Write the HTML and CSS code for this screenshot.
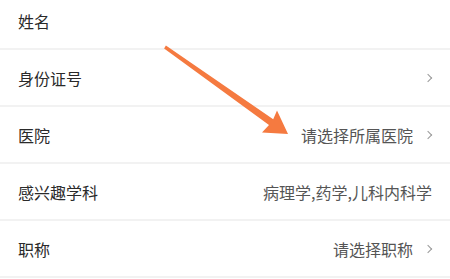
FILE: index.html
```html
<!DOCTYPE html>
<html lang="zh">
<head>
<meta charset="utf-8">
<link rel="stylesheet" href="styles.css">
</head>
<body>
<div class="page">
  <ul class="form">
    <li class="row first"><span class="label">姓名</span></li>
    <li class="row"><span class="label">身份证号</span><span class="value"><i class="chev"></i></span></li>
    <li class="row"><span class="label">医院</span><span class="value">请选择所属医院<i class="chev"></i></span></li>
    <li class="row"><span class="label">感兴趣学科</span><span class="value plain">病理学,药学,儿科内科学</span></li>
    <li class="row"><span class="label">职称</span><span class="value">请选择职称<i class="chev"></i></span></li>
  </ul>
  <svg class="arrow" width="450" height="279" viewBox="0 0 450 279">
    <polygon fill="#f57a40" points="165.9,45.6 273.2,119.2 277,110.5 288,134 262,132.5 269,125 164.1,48.4"/>
  </svg>
</div>
</body>
</html>
```
FILE: styles.css
```css
html, body {
  margin: 0;
  padding: 0;
  background: #fff;
}
.page {
  position: relative;
  width: 450px;
  height: 279px;
  overflow: hidden;
  font-family: "Noto Sans CJK SC", "Noto Sans", sans-serif;
}
.form {
  list-style: none;
  margin: 0;
  padding: 0;
}
.row {
  display: flex;
  align-items: center;
  justify-content: space-between;
  height: 55px;
  border-bottom: 2px solid #f2f2f2;
  padding: 0 17px 0 18px;
}
.row.first {
  margin-top: -7px;
}
.label {
  font-size: 16px;
  color: #2a2a2a;
}
.value {
  display: flex;
  align-items: center;
  font-size: 16px;
  color: #555;
}
.value.plain {
  margin-right: 1px;
}
.chev {
  display: inline-block;
  width: 5px;
  height: 5px;
  border-top: 1px solid #999;
  border-right: 1px solid #999;
  transform: rotate(45deg);
  margin-left: 12px;
  margin-right: 2px;
}
.arrow {
  position: absolute;
  left: 0;
  top: 0;
  pointer-events: none;
}
```
